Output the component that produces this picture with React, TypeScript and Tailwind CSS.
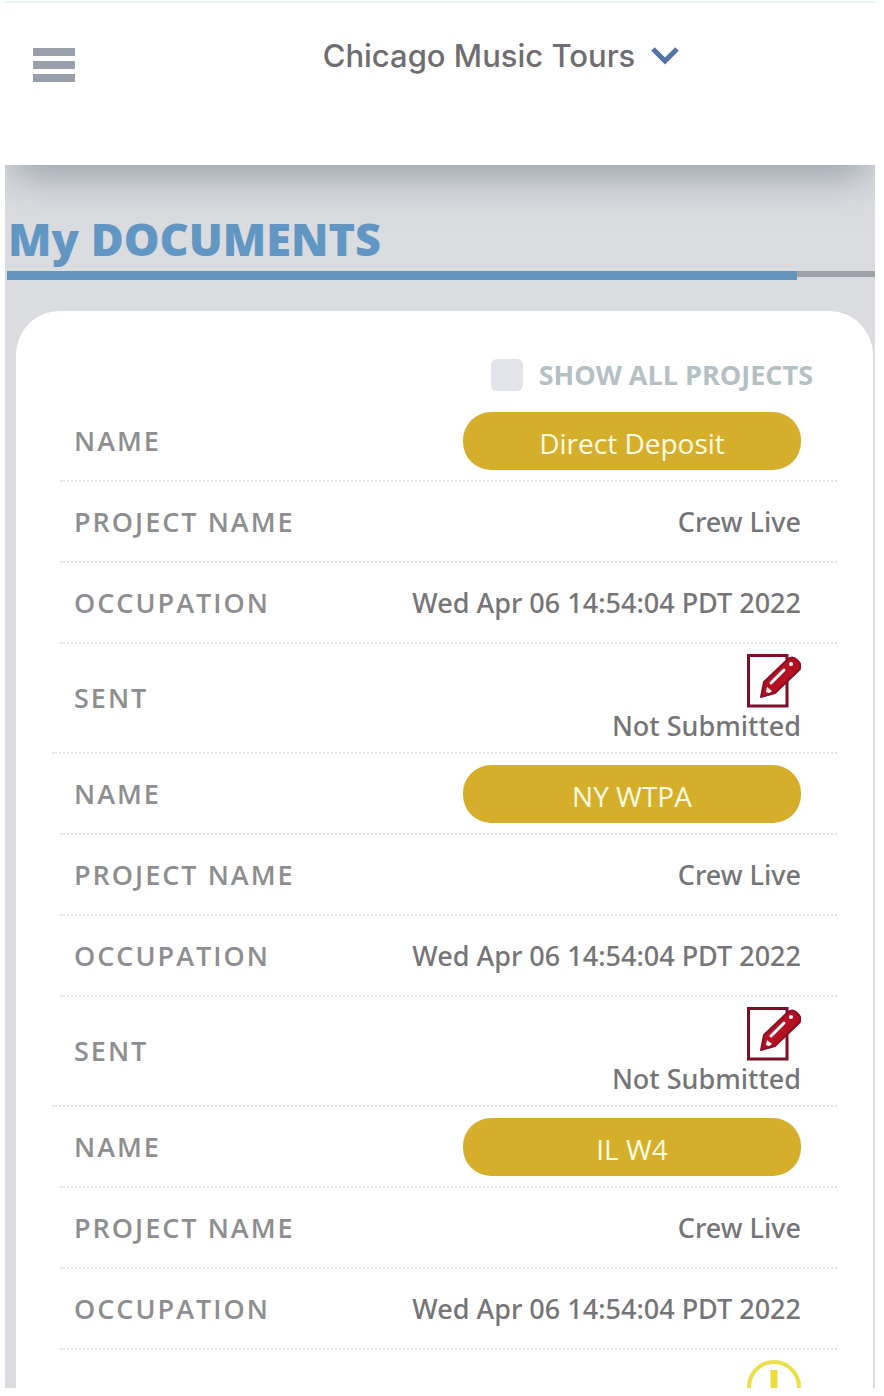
import { useState } from 'react';

type Status = 'missing' | 'pending';

const documents: { name: string; project: string; occupation: string; status: Status }[] = [
  { name: 'Direct Deposit', project: 'Crew Live', occupation: 'Wed Apr 06 14:54:04 PDT 2022', status: 'missing' },
  { name: 'NY WTPA', project: 'Crew Live', occupation: 'Wed Apr 06 14:54:04 PDT 2022', status: 'missing' },
  { name: 'IL W4', project: 'Crew Live', occupation: 'Wed Apr 06 14:54:04 PDT 2022', status: 'pending' },
];

function EditIcon() {
  return (
    <svg viewBox="0 0 56 56" className="w-14 h-14" aria-hidden="true">
      <path d="M3.5 3.5H42V54H3.5Z" fill="#fff" stroke="#7d1028" strokeWidth="3" />
      <path
        d="M16 45L19 30L42 8Q47 3 52 8Q58 14 54 18L30 41Z"
        fill="#b50f22"
        stroke="#8c1024"
        strokeWidth="2"
        strokeLinejoin="round"
      />
      <path d="M26 31L39 18" stroke="#fff" strokeWidth="3" strokeLinecap="round" />
      <path d="M21 40L22 35L27 39L24 41Z" fill="#fff" />
      <circle cx="46" cy="12" r="2" fill="#fff" />
    </svg>
  );
}

function AlertIcon() {
  return (
    <svg viewBox="0 0 56 56" className="w-14 h-14" aria-hidden="true">
      <circle cx="29" cy="29" r="25" fill="none" stroke="#ecdf4a" strokeWidth="4" />
      <path d="M29 12V34M29 39V45" stroke="#ecdc3c" strokeWidth="7" />
    </svg>
  );
}

function Row({ label, last, children }: { label?: string; last?: boolean; children: React.ReactNode }) {
  return (
    <tr
      className={`flex items-center justify-between border-b-2 border-dotted border-[#e2e2e2] pr-9 ${
        last ? 'h-[110px] pl-[22px]' : 'ml-2 h-[81px] pl-[14px]'
      }`}
    >
      <th scope="row" className="text-[27px] leading-9 font-semibold tracking-[2px] text-[#8e8e90]">
        {label}
      </th>
      <td className="text-right font-['Noto_Sans',sans-serif] text-[27px] leading-9 font-medium text-[#757577]">
        {children}
      </td>
    </tr>
  );
}

export default function App() {
  const [showAll, setShowAll] = useState(false);

  return (
    <div className="h-screen overflow-hidden bg-white pt-px pr-[9px] pb-2 pl-[5px] font-['Open_Sans','Noto_Sans',sans-serif]">
      <div className="flex h-full flex-col overflow-hidden bg-[#dadce0]">
        <header className="relative flex h-[164px] shrink-0 items-start justify-center border-t-2 border-[#e6f8f9] bg-white shadow-[0_16px_40px_-8px_rgba(70,85,100,0.5)]">
          <button aria-label="Menu" className="absolute top-11 left-7 flex w-[42px] flex-col gap-[5px] py-px">
            <span className="h-2 w-full bg-[#9a9fac]" />
            <span className="h-2 w-full bg-[#9a9fac]" />
            <span className="h-2 w-full bg-[#9a9fac]" />
          </button>
          <div className="mt-[33px] ml-[122px] flex items-center gap-4">
            <select
              aria-label="Project"
              className="field-sizing-content appearance-none bg-transparent font-[Inter,sans-serif] text-[31px] leading-10 font-medium text-[#6e6e70]"
            >
              <option>Chicago Music Tours</option>
            </select>
            <svg viewBox="0 0 28 20" className="pointer-events-none h-5 w-7" aria-hidden="true">
              <path d="M2 3L14 15L26 3" fill="none" stroke="#5374ab" strokeWidth="5" />
            </svg>
          </div>
        </header>

        <main className="flex-1">
          <h1 className="mt-[42px] ml-[3px] text-[45px] leading-[64px] font-extrabold text-[#6397c3]">My DOCUMENTS</h1>
          <div className="ml-[2px] h-[9px] border-t-[6px] border-[#9fa2a6]">
            <div className="-mt-[6px] h-[9px] w-[91%] bg-[#6496bd]" />
          </div>

          <section className="mt-[31px] mr-[2px] ml-[11px] rounded-t-[44px] bg-white pt-12 pr-9 pl-9">
            <label className="flex h-8 items-center justify-end gap-4 pr-6 text-[27px] font-bold text-[#b5c0c5]">
              <input
                type="checkbox"
                checked={showAll}
                onChange={(e) => setShowAll(e.target.checked)}
                className="size-8 appearance-none rounded-md bg-[#e2e4ea] checked:bg-[#6397c3]"
              />
              SHOW ALL PROJECTS
            </label>

            <table className="mt-[10px] block">
              {documents.map((doc) => (
                <tbody key={doc.name} className="block">
                  <Row label="NAME">
                    <button className="block h-[58px] w-[338px] rounded-[28px] bg-[#d5af2b] pt-1 font-['Open_Sans',sans-serif] text-[28px] text-[#fffbe0]">
                      {doc.name}
                    </button>
                  </Row>
                  <Row label="PROJECT NAME">{doc.project}</Row>
                  <Row label="OCCUPATION">{doc.occupation}</Row>
                  {doc.status === 'missing' ? (
                    <Row label="SENT" last>
                      <span className="flex flex-col items-end">
                        <EditIcon />
                        <span>Not Submitted</span>
                      </span>
                    </Row>
                  ) : (
                    <Row last>
                      <span className="flex flex-col items-end pb-9">
                        <AlertIcon />
                      </span>
                    </Row>
                  )}
                </tbody>
              ))}
            </table>
          </section>
        </main>
      </div>
    </div>
  );
}
